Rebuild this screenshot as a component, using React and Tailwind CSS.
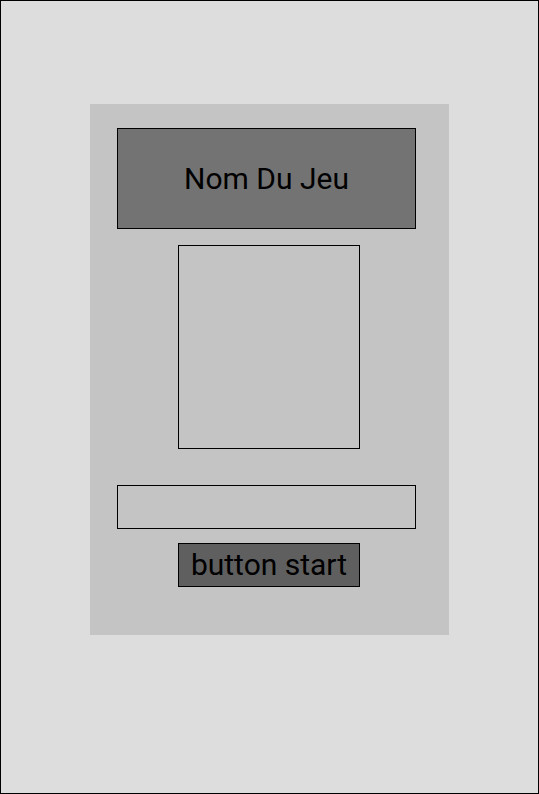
export default function App() {
  return (
    <div className="w-[539px] h-[794px] border border-black bg-[#dddddd] flex justify-center" style={{ fontFamily: 'Roboto, "Noto Sans", sans-serif' }}>
      <div className="mt-[103px] w-[359px] h-[531px] bg-[#c4c4c4] pt-[24px] flex flex-col">
        <div className="ml-[27px] w-[299px] h-[101px] border border-black bg-[#737373] flex items-center justify-center text-[30px] text-black">
          Nom Du Jeu
        </div>
        <div className="mt-[16px] ml-[88px] w-[182px] h-[204px] border border-black"></div>
        <div className="mt-[36px] ml-[27px] w-[299px] h-[44px] border border-black"></div>
        <div className="mt-[14px] ml-[88px] w-[182px] h-[44px] border border-black bg-[#5f5f5f] flex items-center justify-center text-[30px] text-black leading-none">
          button start
        </div>
      </div>
    </div>
  );
}
